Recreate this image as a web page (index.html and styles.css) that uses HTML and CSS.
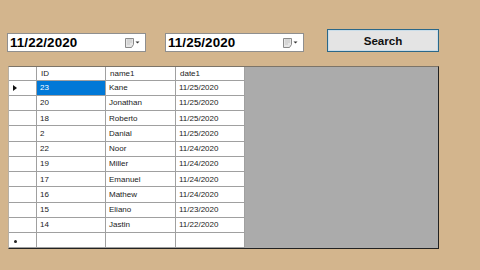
FILE: index.html
```html
<!DOCTYPE html>
<html>
<head>
<meta charset="utf-8">
<link rel="stylesheet" href="styles.css">
</head>
<body>
<div class="form">
  <div class="toolbar">
    <div class="picker">
      <span class="date">11/22/2020</span>
      <svg class="cal" width="15" height="10" viewBox="0 0 15 10">
        <path d="M0.5 0.5H8.5V6.5L6.5 9.5H0.5Z" fill="#e6e6e6" stroke="#8a8a8a"/>
        <path d="M2 2H7M2 4H7M2 6H5" stroke="#c4c4c4"/>
        <path d="M10.5 3.5H14.5L12.5 5.5Z" fill="#333"/>
      </svg>
    </div>
    <div class="picker">
      <span class="date">11/25/2020</span>
      <svg class="cal" width="15" height="10" viewBox="0 0 15 10">
        <path d="M0.5 0.5H8.5V6.5L6.5 9.5H0.5Z" fill="#e6e6e6" stroke="#8a8a8a"/>
        <path d="M2 2H7M2 4H7M2 6H5" stroke="#c4c4c4"/>
        <path d="M10.5 3.5H14.5L12.5 5.5Z" fill="#333"/>
      </svg>
    </div>
    <button class="search">Search</button>
  </div>
  <div class="grid-view">
    <div class="table">
      <div class="hdr corner"></div>
      <div class="hdr">ID</div>
      <div class="hdr">name1</div>
      <div class="hdr">date1</div>

      <div class="rh"><span class="arrow"></span></div><div class="c sel">23</div><div class="c">Kane</div><div class="c">11/25/2020</div>
      <div class="rh"></div><div class="c">20</div><div class="c">Jonathan</div><div class="c">11/25/2020</div>
      <div class="rh"></div><div class="c">18</div><div class="c">Roberto</div><div class="c">11/25/2020</div>
      <div class="rh"></div><div class="c">2</div><div class="c">Danial</div><div class="c">11/25/2020</div>
      <div class="rh"></div><div class="c">22</div><div class="c">Noor</div><div class="c">11/24/2020</div>
      <div class="rh"></div><div class="c">19</div><div class="c">Miller</div><div class="c">11/24/2020</div>
      <div class="rh"></div><div class="c">17</div><div class="c">Emanuel</div><div class="c">11/24/2020</div>
      <div class="rh"></div><div class="c">16</div><div class="c">Mathew</div><div class="c">11/24/2020</div>
      <div class="rh"></div><div class="c">15</div><div class="c">Eliano</div><div class="c">11/23/2020</div>
      <div class="rh"></div><div class="c">14</div><div class="c">Jastin</div><div class="c">11/22/2020</div>
      <div class="rh new"><span class="dot"></span></div><div class="c"></div><div class="c"></div><div class="c"></div>
    </div>
  </div>
</div>
</body>
</html>
```
FILE: styles.css
```css
* { box-sizing: border-box; }
html, body {
  margin: 0;
  padding: 0;
}
body {
  width: 480px;
  height: 270px;
  background: #d3b58d;
  font-family: "Liberation Sans", Arial, sans-serif;
  overflow: hidden;
}
.form {
  padding: 29px 0 0 7px;
}
.toolbar {
  display: flex;
  align-items: flex-start;
}
.picker {
  width: 139px;
  height: 19px;
  margin-top: 4px;
  margin-right: 19px;
  background: #fff;
  border: 1px solid #8f8f8f;
  display: flex;
  align-items: center;
  padding-left: 2px;
  padding-right: 5px;
}
.date {
  flex: 1;
  font-weight: bold;
  font-size: 13.4px;
  color: #000;
  letter-spacing: 0.1px;
}
.cal { display: block; }
.search {
  margin-left: 4px;
  width: 112px;
  height: 23px;
  background: #e4e4e4;
  border: 1px solid #2b6788;
  box-shadow: inset 0 0 0 1px #c9dde9;
  font-family: "Liberation Sans", Arial, sans-serif;
  font-weight: bold;
  font-size: 11.6px;
  color: #111;
  padding: 0;
}
.grid-view {
  margin-top: 14px;
  margin-left: 1px;
  width: 431px;
  height: 183px;
  background: #ababab;
  border-top: 1px solid #7c7468;
  border-left: 1px solid #b8b0a4;
  border-right: 1px solid #222;
  border-bottom: 1px solid #222;
}
.table {
  display: grid;
  grid-template-columns: 28px 69px 70px 69px;
  grid-template-rows: 13.5px repeat(11, 15.25px);
  width: 236px;
  background: #fff;
  font-size: 8px;
  color: #1a1a1a;
}
.table > div {
  border-right: 1px solid #a0a0a0;
  border-bottom: 1px solid #a0a0a0;
  display: flex;
  align-items: center;
  white-space: nowrap;
  overflow: hidden;
}
.hdr { padding-left: 4px; }
.c { padding-left: 3px; }
.sel {
  background: #0078d7;
  color: #fff;
}
.rh { justify-content: flex-start; padding-left: 4px; }
.arrow {
  width: 0;
  height: 0;
  border-top: 3.5px solid transparent;
  border-bottom: 3.5px solid transparent;
  border-left: 4px solid #111;
}
.new { padding-left: 5px; padding-top: 2px; }
.dot {
  width: 3px;
  height: 3px;
  border-radius: 50%;
  background: #222;
}
```
